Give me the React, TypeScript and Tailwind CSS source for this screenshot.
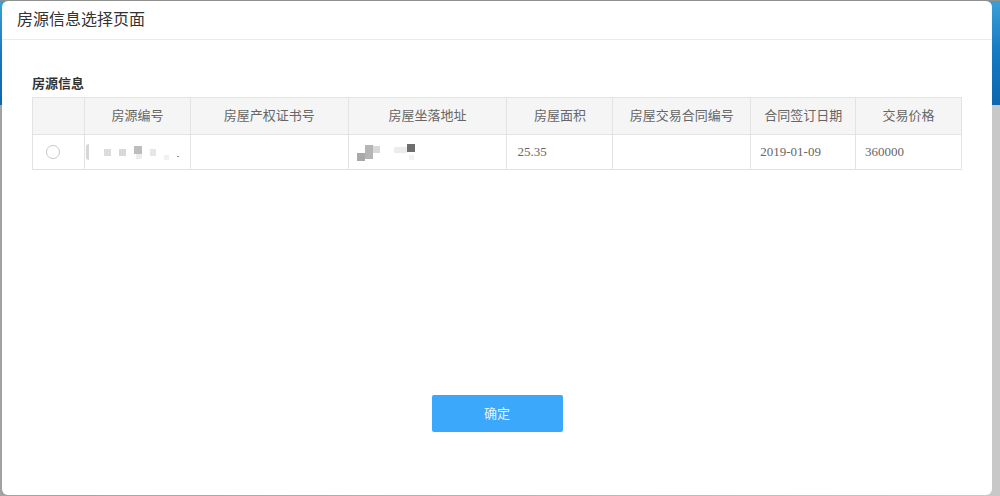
const columns = [
  { key: 'radio', title: '', width: 'w-[51px]' },
  { key: 'code', title: '房源编号', width: 'w-[106px]' },
  { key: 'cert', title: '房屋产权证书号', width: 'w-[158px]' },
  { key: 'addr', title: '房屋坐落地址', width: 'w-[159px]' },
  { key: 'area', title: '房屋面积', width: 'w-[106px]' },
  { key: 'contract', title: '房屋交易合同编号', width: 'w-[138px]' },
  { key: 'date', title: '合同签订日期', width: 'w-[105px]' },
  { key: 'price', title: '交易价格', width: 'w-[106px]' },
];

// blurred / masked data in the screenshot
function MaskedCode() {
  return (
    <div className="flex h-full items-center gap-[8px] pl-[1px]">
      <span className="h-[16px] w-[3px] rounded-l-full bg-[#d6d6d6]" />
      <span className="ml-[7px] h-[7px] w-[7px] bg-[#dcdcdc]" />
      <span className="h-[7px] w-[7px] bg-[#d8d8d8]" />
      <span className="flex flex-col items-end">
        <span className="h-[8px] w-[8px] bg-[#bdbdbd]" />
        <span className="h-[5px] w-[6px] bg-[#ececec]" />
      </span>
      <span className="h-[7px] w-[6px] self-center bg-[#e6e6e6]" />
      <span className="mt-[10px] h-[5px] w-[5px] bg-[#f1f1f1]" />
      <span className="mt-[8px] h-[1px] w-[2px] bg-[#888]" />
    </div>
  );
}

function MaskedAddr() {
  return (
    <div className="flex h-full items-center pl-[8px]">
      <span className="mt-[10px] h-[8px] w-[8px] bg-[#a9a9a9]" />
      <span className="h-[14px] w-[8px] bg-[#b5b5b5]" />
      <span className="mb-[6px] h-[7px] w-[7px] bg-[#d9d9d9]" />
      <span className="mb-[4px] ml-[14px] h-[6px] w-[13px] bg-[#ececec]" />
      <span className="flex flex-col">
        <span className="mb-[3px] h-[8px] w-[8px] bg-[#6e6e6e]" />
        <span className="ml-[2px] h-[5px] w-[5px] bg-[#f2f2f2]" />
      </span>
    </div>
  );
}

export default function App() {
  const font = { fontFamily: '"Liberation Serif", "Noto Sans CJK SC", serif' };
  return (
    <div className="relative h-[496px] w-[1000px] overflow-hidden bg-[#a9a9a9]" style={font}>
      {/* page behind the modal */}
      <div className="h-[1px] bg-[#8f8f8f]" />
      <div className="h-[104px] bg-gradient-to-b from-[#3ba0d6] via-[#1479c2] to-[#0d66ae]" />
      <div className="h-[391px] bg-gradient-to-r from-[#a2a2a2] via-[#b4b4b4] to-[#c8c8c8]" />

      {/* modal */}
      <div className="absolute left-[2px] top-[1px] flex h-[494px] w-[990px] flex-col rounded-[6px] bg-white">
        <div className="flex h-[39px] items-center border-b border-[#ebebeb] px-[15px] text-[16px] text-[#333]">
          房源信息选择页面
        </div>

        <div className="px-[30px] pt-[35px]">
          <div className="mb-[4px] text-[13px] font-bold leading-[18px] text-[#333]">房源信息</div>
          <div className="w-[930px] border border-[#e3e3e3]">
            <div className="flex h-[36px] bg-[#f5f5f5] text-[13px] text-[#666]">
              {columns.map((c, i) => (
                <div
                  key={c.key}
                  className={`${c.width} flex items-center justify-center ${i > 0 ? 'border-l border-[#e3e3e3]' : ''}`}
                >
                  {c.title}
                </div>
              ))}
            </div>
            <div className="flex h-[35px] border-t border-[#e3e3e3] text-[13px] text-[#666]">
              <div className="flex w-[51px] items-center pl-[13px]">
                <span className="h-[14px] w-[14px] rounded-full border border-[#c8c8c8] bg-white" />
              </div>
              <div className="w-[106px] border-l border-[#e3e3e3]">
                <MaskedCode />
              </div>
              <div className="w-[158px] border-l border-[#e3e3e3]" />
              <div className="w-[159px] border-l border-[#e3e3e3]">
                <MaskedAddr />
              </div>
              <div className="flex w-[106px] items-center border-l border-[#e3e3e3] pl-[10px]">25.35</div>
              <div className="w-[138px] border-l border-[#e3e3e3]" />
              <div className="flex w-[105px] items-center border-l border-[#e3e3e3] pl-[9px]">2019-01-09</div>
              <div className="flex w-[106px] items-center border-l border-[#e3e3e3] pl-[9px]">360000</div>
            </div>
          </div>
        </div>

        <div className="flex flex-1 items-start justify-center pt-[225px]">
          <button
            type="button"
            className="h-[37px] w-[131px] rounded-[2px] bg-[#3ba8fb] text-[13px] text-[#e6f3ff]"
          >
            确定
          </button>
        </div>
      </div>
    </div>
  );
}
